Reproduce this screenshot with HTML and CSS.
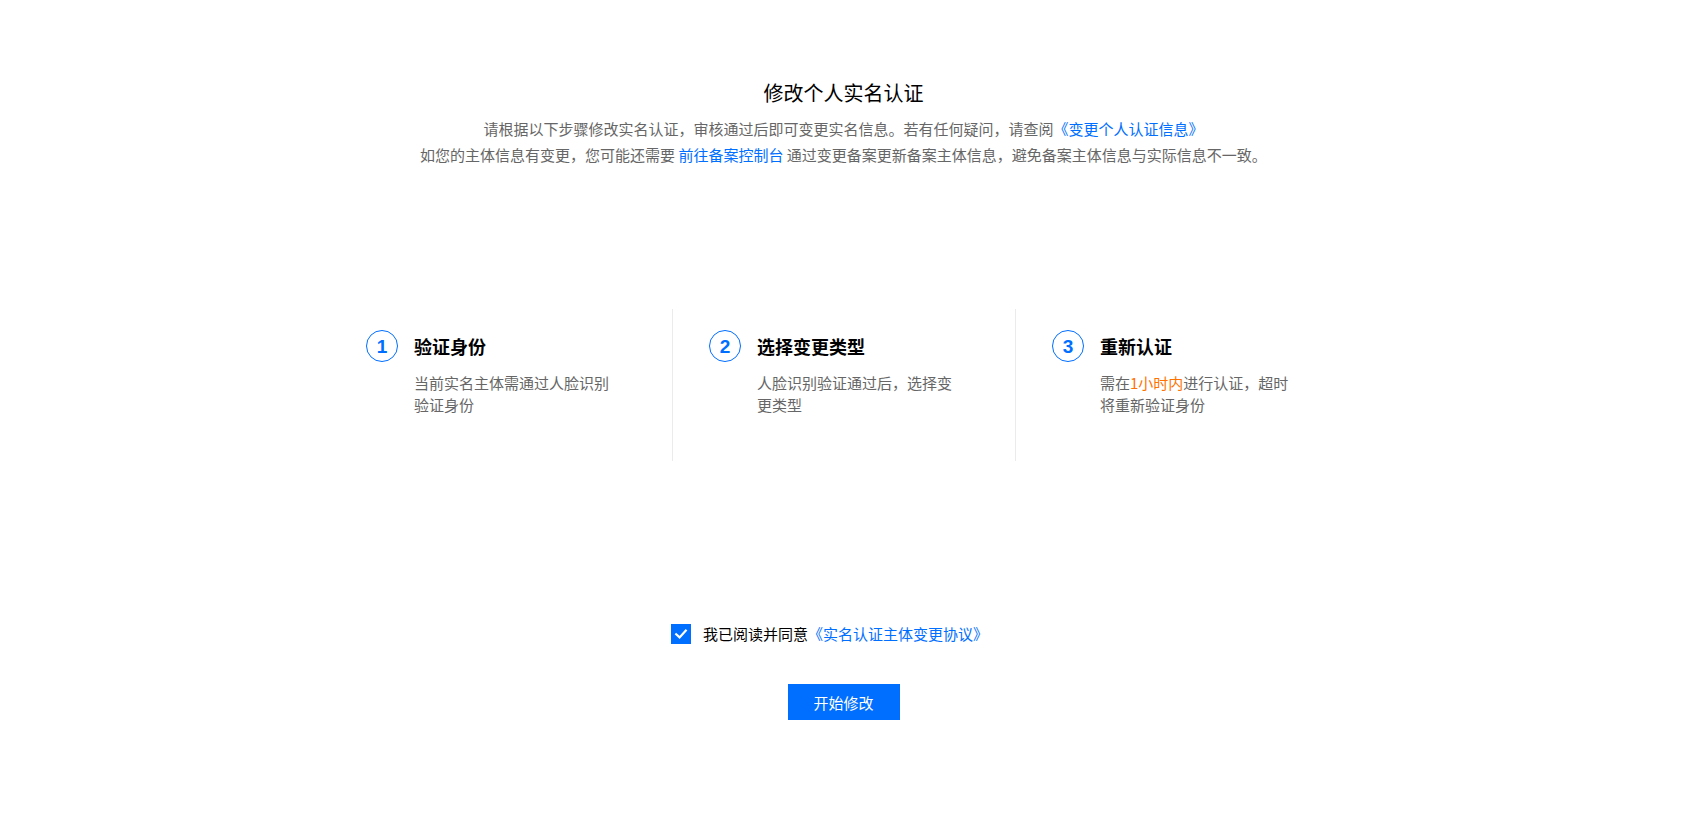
FILE: index.html
```html
<!DOCTYPE html>
<html lang="zh-CN">
<head>
<meta charset="utf-8">
<title>修改个人实名认证</title>
<link rel="stylesheet" href="styles.css">
</head>
<body>
<main class="page">
  <header class="intro">
    <h1 class="intro-title">修改个人实名认证</h1>
    <p class="intro-desc">请根据以下步骤修改实名认证，审核通过后即可变更实名信息。若有任何疑问，请查阅<a class="link" href="#">《变更个人认证信息》</a></p>
    <p class="intro-desc">如您的主体信息有变更，您可能还需要 <a class="link" href="#">前往备案控制台</a> 通过变更备案更新备案主体信息，避免备案主体信息与实际信息不一致。</p>
  </header>

  <section class="steps">
    <div class="step">
      <div class="step-head">
        <span class="step-num">1</span>
        <span class="step-title">验证身份</span>
      </div>
      <p class="step-desc">当前实名主体需通过人脸识别验证身份</p>
    </div>
    <div class="step">
      <div class="step-head">
        <span class="step-num">2</span>
        <span class="step-title">选择变更类型</span>
      </div>
      <p class="step-desc">人脸识别验证通过后，选择变更类型</p>
    </div>
    <div class="step">
      <div class="step-head">
        <span class="step-num">3</span>
        <span class="step-title">重新认证</span>
      </div>
      <p class="step-desc">需在<span class="warn">1小时内</span>进行认证，超时将重新验证身份</p>
    </div>
  </section>

  <div class="agree">
    <span class="checkbox">
      <svg width="14" height="14" viewBox="0 0 14 14"><path d="M2.2 7.2 L5.6 10.4 L11.8 3.6" fill="none" stroke="#fff" stroke-width="2.2" stroke-linecap="square"/></svg>
    </span>
    <span class="agree-text">我已阅读并同意<a class="link" href="#">《实名认证主体变更协议》</a></span>
  </div>

  <div class="actions">
    <button class="btn-primary" type="button">开始修改</button>
  </div>
</main>
</body>
</html>
```

FILE: styles.css
```css
* { box-sizing: border-box; }

html, body {
  margin: 0;
  padding: 0;
  background: #fff;
}

body {
  font-family: "Noto Sans CJK SC", "Liberation Sans", sans-serif;
  color: #000;
}

.page {
  display: flex;
  flex-direction: column;
  align-items: center;
  padding-top: 79px;
}

.intro {
  text-align: center;
}

.intro-title {
  margin: 0 0 9px;
  font-size: 20px;
  line-height: 28px;
  font-weight: normal;
  color: #000;
}

.intro-desc {
  margin: 0;
  font-size: 15px;
  line-height: 25.5px;
  color: #666;
}

.link {
  color: #006eff;
  text-decoration: none;
}

.steps {
  display: grid;
  grid-template-columns: repeat(3, 343px);
  margin-top: 142px;
}

.step {
  height: 152px;
  padding: 21px 0 0 36px;
  border-left: 1px solid transparent;
}

.step + .step {
  border-left-color: #ebebeb;
}

.step-head {
  display: flex;
  align-items: center;
  gap: 16px;
  height: 32px;
}

.step-num {
  width: 32px;
  height: 32px;
  flex: none;
  border: 1px solid #006eff;
  border-radius: 50%;
  display: flex;
  align-items: center;
  justify-content: center;
  color: #006eff;
  font-size: 19px;
  line-height: 1;
  font-weight: bold;
  font-family: "Liberation Sans", sans-serif;
}

.step-title {
  font-size: 18px;
  line-height: 26px;
  font-weight: bold;
  color: #000;
}

.step-desc {
  margin: 10px 0 0 48px;
  width: 200px;
  font-size: 15px;
  line-height: 22px;
  color: #666;
}

.warn {
  color: #ff7200;
}

.agree {
  display: flex;
  align-items: center;
  gap: 12px;
  margin-top: 162px;
  margin-right: 28px;
  height: 22px;
}

.checkbox {
  width: 20px;
  height: 20px;
  background: #006eff;
  display: flex;
  align-items: center;
  justify-content: center;
}

.agree-text {
  font-size: 15px;
  line-height: 22px;
  color: #000;
}

.actions {
  margin-top: 39px;
}

.btn-primary {
  width: 112px;
  height: 36px;
  border: none;
  background: #006eff;
  color: #fff;
  font-family: "Noto Sans CJK SC", "Liberation Sans", sans-serif;
  font-size: 15px;
  cursor: pointer;
  padding: 0;
}
```
